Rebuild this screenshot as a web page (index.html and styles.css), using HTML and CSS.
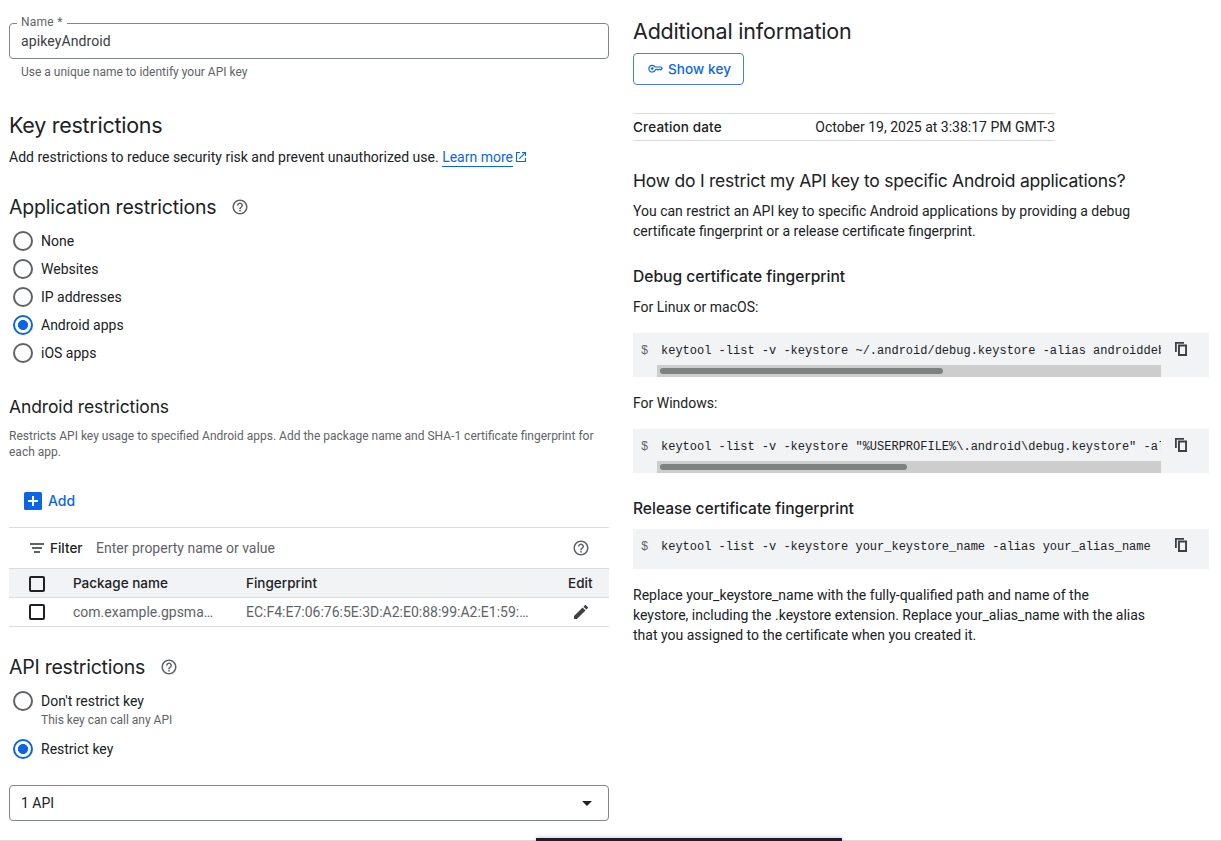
FILE: index.html
```html
<!DOCTYPE html>
<html lang="en">
<head>
<meta charset="utf-8">
<title>API key</title>
<link rel="stylesheet" href="styles.css">
</head>
<body>
<svg class="defs" width="0" height="0">
  <symbol id="help" viewBox="0 0 24 24"><path d="M11 18h2v-2h-2v2zm1-16C6.48 2 2 6.48 2 12s4.480 10 10 10 10-4.480 10-10S17.520 2 12 2zm0 18c-4.410 0-8-3.590-8-8s3.590-8 8-8 8 3.590 8 8-3.590 8-8 8zm0-14c-2.210 0-4 1.790-4 4h2c0-1.100.9-2 2-2s2 .9 2 2c0 2-3 1.750-3 5h2c0-2.250 3-2.500 3-5 0-2.210-1.790-4-4-4z"/></symbol>
  <symbol id="copy" viewBox="0 0 12 14"><path fill-rule="evenodd" d="M0 0h9v1.800H1.800V10H0zM3 2.600h9V14H3zM4.900 4.500v7.600h5.200V4.500z"/></symbol>
</svg>
<div class="page">
  <main class="form">
    <fieldset class="field"><legend>Name *</legend><span>apikeyAndroid</span></fieldset>
    <div class="hint">Use a unique name to identify your API key</div>

    <h2 class="key-title"><span>Key restrictions</span></h2>
    <p class="intro">Add restrictions to reduce security risk and prevent unauthorized use. <a>Learn more</a><svg class="ext" viewBox="0 0 10 10"><path d="M4 .5H.5v9h9V6M6 .5h3.500V4M9.300.7L3.200 6.800" fill="none" stroke="currentColor" stroke-width="1.200"/></svg></p>

    <h3 class="app-title"><span>Application restrictions</span><svg class="help"><use href="#help"/></svg></h3>
    <div class="radios">
      <label class="radio"><i></i>None</label>
      <label class="radio"><i></i>Websites</label>
      <label class="radio"><i></i>IP addresses</label>
      <label class="radio on"><i></i>Android apps</label>
      <label class="radio"><i></i>iOS apps</label>
    </div>

    <h4 class="android-title"><span>Android restrictions</span></h4>
    <p class="note">Restricts API key usage to specified Android apps. Add the package name and SHA-1 certificate fingerprint for each app.</p>
    <div class="add"><svg viewBox="0 0 18 18"><rect width="18" height="18" rx="1.500" fill="#0b66e4"/><path d="M9 4v10M4 9h10" stroke="#fff" stroke-width="2"/></svg><span>Add</span></div>

    <div class="toolbar">
      <svg class="lines" viewBox="0 0 14 10"><path d="M0 1h14M2 5h10M4 9h6" stroke="currentColor" stroke-width="1.800"/></svg>
      <b>Filter</b><span class="placeholder">Enter property name or value</span>
      <svg class="help"><use href="#help"/></svg>
    </div>
    <div class="row head"><i class="box"></i><span class="pkg">Package name</span><span class="fp">Fingerprint</span><span class="edit">Edit</span></div>
    <div class="row"><i class="box"></i><span>com.example.gpsma…</span><span>EC:F4:E7:06:76:5E:3D:A2:E0:88:99:A2:E1:59:…</span>
      <svg class="pencil" viewBox="3 3 18 18"><path d="M3 17.250V21h3.750L17.810 9.940l-3.750-3.750L3 17.250zM20.710 7.040a1 1 0 0 0 0-1.410l-2.340-2.340a1 1 0 0 0-1.410 0l-1.830 1.830 3.750 3.750 1.830-1.830z"/></svg></div>

    <h3 class="api-title"><span>API restrictions</span><svg class="help"><use href="#help"/></svg></h3>
    <div class="radios">
      <label class="radio"><i></i>Don't restrict key</label>
      <div class="sub">This key can call any API</div>
      <label class="radio on"><i></i>Restrict key</label>
    </div>
    <div class="select"><span>1 API</span><svg viewBox="0 0 10 5"><path d="M0 0h10L5 5z"/></svg></div>
  </main>

  <aside class="info">
    <h2 class="info-title"><span>Additional information</span></h2>
    <button class="show"><svg viewBox="0 0 15 9" fill="none" stroke="currentColor"><path d="M7 3H13l1.200 1.500L12.800 6l-1.400-.9L10 6l-1.300-.9L7.200 6A3.300 3.300 0 1 1 7 3z" stroke-width="1.200"/><circle cx="4.200" cy="4.500" r=".9" fill="currentColor"/></svg><span>Show key</span></button>
    <div class="created"><b>Creation date</b><span>October 19, 2025 at 3:38:17 PM GMT-3</span></div>
    <h4 class="how"><span>How do I restrict my API key to specific Android applications?</span></h4>
    <p class="text">You can restrict an API key to specific Android applications by providing a debug certificate fingerprint or a release certificate fingerprint.</p>
    <h5 class="debug"><span>Debug certificate fingerprint</span></h5>
    <p class="os">For Linux or macOS:</p>
    <div class="code"><span class="prompt">$</span><div class="scroller"><pre>keytool -list -v -keystore ~/.android/debug.keystore -alias androiddebugkey</pre><div class="track"><div class="thumb linux"></div></div></div><svg class="copy"><use href="#copy"/></svg></div>
    <p class="os">For Windows:</p>
    <div class="code"><span class="prompt">$</span><div class="scroller"><pre>keytool -list -v -keystore "%USERPROFILE%\.android\debug.keystore" -alias</pre><div class="track"><div class="thumb windows"></div></div></div><svg class="copy"><use href="#copy"/></svg></div>
    <h5 class="release"><span>Release certificate fingerprint</span></h5>
    <div class="code plain"><span class="prompt">$</span><div class="scroller"><pre>keytool -list -v -keystore your_keystore_name -alias your_alias_name</pre></div><svg class="copy"><use href="#copy"/></svg></div>
    <p class="replace">Replace your_keystore_name with the fully-qualified path and name of the keystore, including the .keystore extension. Replace your_alias_name with the alias that you assigned to the certificate when you created it.</p>
  </aside>
  <div class="baseline"></div>
  <div class="snackbar"></div>
</div>
</body>
</html>
```
FILE: styles.css
```css
* { box-sizing: border-box; }
body { margin: 0; background: #fff; color: #202124; font: 14px/20px Roboto, sans-serif; }
h2, h3, h4, h5, p, pre { margin: 0; font-weight: 400; }
b { font-weight: 500; }
svg { display: block; flex: none; }
.defs { position: absolute; }
.page { position: relative; width: 1221px; height: 841px; overflow: hidden; padding: 0 12px 0 9px; display: grid; grid-template-columns: 600px 576px; column-gap: 24px; align-items: start; }
h2, h3, h4, h5, .head, .add, .show, b { font-family: Inter, sans-serif; }
h2 { font-size: 21.500px; line-height: 28px; letter-spacing: -.2px; }
h3 { display: flex; align-items: center; gap: 15px; font-size: 19.500px; line-height: 24px; letter-spacing: -.19px; }
h4 { font-size: 17.500px; line-height: 24px; letter-spacing: -.12px; }
h5 { padding-top: 1px; font-size: 15.600px; line-height: 24px; font-weight: 500; }
b, .head { font-size: 13.500px; }
.help { width: 18px; height: 18px; fill: #5f6368; }

.field { height: 45px; margin: 14px 0 0; padding: 0 11px; border: 1px solid #80868b; border-radius: 4px; color: #3c4043; }
.field legend { margin-left: -4px; padding: 0 4px; font-size: 12px; line-height: 17px; height: 18px; letter-spacing: .25px; color: #5f6368; }
.field span { display: block; line-height: 18px; letter-spacing: .1px; }
.hint { margin: 5px 12px 0; font-size: 12px; line-height: 16px; color: #5f6368; }
.key-title { margin-top: 31px; letter-spacing: -.27px; }
.intro { margin-top: 8px; display: flex; white-space: pre; }
.intro a { height: 20px; color: #0b66e4; border-bottom: 1px solid #0b66e4; }
.ext { width: 10px; height: 10px; margin: 5px 0 0 3px; color: #0b66e4; }
.app-title { margin-top: 28px; }
.radios { margin-top: 8px; }
.radio { display: flex; align-items: center; gap: 8px; height: 28px; padding-left: 4px; }
.radio i { width: 20px; height: 20px; border: 2px solid #5f6368; border-radius: 50%; }
.radio.on i { border-color: #0b66e4; background: radial-gradient(circle, #0b66e4 4.700px, transparent 5.300px); }
.android-title { margin-top: 28px; }
.note { margin-top: 9px; font-size: 12px; line-height: 16px; color: #5f6368; }
.add { display: flex; align-items: center; gap: 6px; margin: 31px 0 16px 15px; height: 20px; color: #0b66e4; font-weight: 500; }
.add svg { width: 18px; height: 18px; }
.toolbar { display: flex; align-items: center; height: 41px; border-top: 1px solid #dadce0; padding: 0 19px 0 21px; }
.lines { width: 14px; height: 10px; color: #5f6368; margin-right: 6px; }
.toolbar b { width: 33px; }
.placeholder { margin-left: 13px; color: #5f6368; }
.toolbar .help { margin-left: auto; }
.row { display: grid; grid-template-columns: 45px 173px 1fr 31px; align-items: center; height: 29px; padding: 0 10px 0 19px; border-bottom: 1px solid #dadce0; color: #5f6368; }
.row.head { height: 30px; border-top: 1px solid #dadce0; background: #f1f3f4; color: #202124; font-weight: 500; }
.box { width: 16px; height: 16px; margin-left: 1px; border: 2px solid #202124; border-radius: 2px; }
.head .box { margin-top: 2px; }
.pencil { width: 14px; height: 14px; margin-left: 6px; fill: #3c4043; }
.api-title { margin-top: 28px; letter-spacing: -.24px; }
.sub { margin: -3px 0 7px 32px; font-size: 12px; line-height: 16px; color: #5f6368; }
.select { display: flex; align-items: center; justify-content: space-between; height: 36px; margin-top: 22px; padding: 0 16px 0 11px; border: 1px solid #80868b; border-radius: 4px; }
.select svg { width: 10px; height: 5px; fill: #202124; }

.info-title { margin-top: 17px; }
.show { display: flex; align-items: center; gap: 5px; width: 111px; height: 32px; margin-top: 8px; padding: 0 0 1px 14px; border: 1px solid #4a80d4; border-radius: 4px; background: #fff; color: #0b66e4; font-size: 13.500px; font-weight: 500; letter-spacing: .1px; }
.show svg { width: 15px; height: 9px; }
.created { display: flex; justify-content: space-between; align-items: center; width: 422px; height: 28px; margin-top: 28px; border: solid #dadce0; border-width: 1px 0; }
.created b { letter-spacing: .15px; }
.how { margin-top: 28px; white-space: nowrap; letter-spacing: -.24px; }
.text { margin-top: 8px; width: 510px; }
.debug { margin-top: 23px; }
.os { margin-top: 8px; }
.code + .os { margin-top: 16px; }
.code { display: flex; height: 44px; margin-top: 16px; background: #f1f3f4; font: 12px/16px "Liberation Mono", monospace; }
.code pre { font: inherit; height: 22px; padding-left: 4px; overflow: hidden; }
.prompt { width: 24px; padding: 10px 0 0 8px; color: #5f6368; }
.scroller { width: 504px; padding-top: 10px; overflow: hidden; display: flex; flex-direction: column; }
.track { height: 12px; margin-top: auto; padding: 3px; background: #cdcdcd; }
.thumb { height: 6px; border-radius: 3px; background: #7d8180; }
.linux { width: 283px; }
.windows { width: 247px; }
.copy { width: 12px; height: 14px; margin: 9px 0 0 14px; fill: #3c4043; }
.release { margin-top: 23px; letter-spacing: -.03px; }
.plain { height: 40px; margin-top: 8px; }
.replace { margin-top: 16px; width: 513px; }

.baseline { position: absolute; left: 0; bottom: 0; width: 100%; height: 1px; background: #dadada; }
.snackbar { position: absolute; left: 536px; bottom: 0; width: 306px; height: 3px; background: #1f1d2b; box-shadow: 0 0 4px rgba(0, 0, 0, .3); }
```
